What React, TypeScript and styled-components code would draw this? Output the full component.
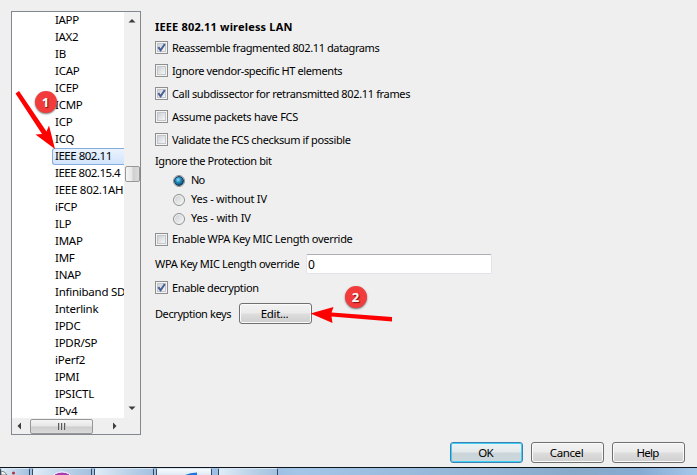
import React from 'react';
import styled, { createGlobalStyle, css } from 'styled-components';

const Global = createGlobalStyle`
  * { box-sizing: border-box; }
  body { margin: 0; background: #efefef; overflow: hidden; }
`;

const Screen = styled.div`
  position: relative;
  width: 697px;
  height: 475px;
  display: flex;
  flex-direction: column;
  overflow: hidden;
  background: #efefef;
  color: #000;
  font: 11px/17px 'Noto Sans', 'Open Sans', sans-serif;
`;

const Body = styled.div`
  display: flex;
  height: 435px;
  padding: 11px 0 0 11px;
  gap: 14px;
`;

const ListBox = styled.div`
  width: 130px;
  height: 424px;
  border: 1px solid #828790;
  display: grid;
  grid-template-columns: 112px 16px;
  grid-template-rows: 406px 16px;
  background: #efefef;
`;

const Items = styled.div`
  background: #fff;
  overflow: hidden;
  padding-left: 40px;
  font-size: 11.5px;
`;

const Item = styled.div<{ $selected?: boolean; $spacing?: number }>`
  height: 17px;
  width: 90px;
  padding-left: 3px;
  line-height: 15px;
  white-space: nowrap;
  letter-spacing: ${(p) => p.$spacing ?? -0.25}px;
  ${(p) =>
    p.$selected &&
    css`
      border-radius: 3px;
      background: linear-gradient(#edf4fd, #cfe3fc);
      box-shadow: inset 0 0 0 1px #84acdd;
    `}
`;

const VBar = styled.div`
  display: flex;
  flex-direction: column;
  align-items: center;
  background: #f0f0f0;
  padding: 5px 0 6px;
`;

const VThumb = styled.div`
  width: 15px;
  height: 16px;
  border: 1px solid #979797;
  border-radius: 2px;
  background: linear-gradient(90deg, #f5f5f5, #e6e6e6 48%, #cfcfcf 52%, #dcdcdc);
`;

const Spacer = styled.div<{ $size?: number }>`
  flex: ${(p) => (p.$size === undefined ? '1' : `0 0 ${p.$size}px`)};
`;

const HBar = styled.div`
  display: flex;
  align-items: center;
  background: #efefef;
  padding: 0 5px 0 4px;
`;

const HThumb = styled.div`
  width: 63px;
  height: 15px;
  display: flex;
  align-items: center;
  justify-content: center;
  gap: 1px;
  border: 1px solid #979797;
  border-radius: 2px;
  background: linear-gradient(#f5f5f5, #e6e6e6 48%, #cdcdcd 52%, #dadada);
`;

const Grip = styled.span`
  width: 2px;
  height: 7px;
  background: linear-gradient(90deg, #5b5b5b 50%, #c5c5c5 50%);
`;

const Options = styled.div`
  padding-top: 7px;
  display: flex;
  flex-direction: column;
`;

const Line = styled.div<{ $h: number; $indent?: number; $gap?: number }>`
  height: ${(p) => p.$h}px;
  padding-left: ${(p) => p.$indent ?? 0}px;
  display: flex;
  align-items: center;
  gap: ${(p) => p.$gap ?? 4}px;
`;

const Label = styled.span<{ $spacing?: number; $bold?: boolean; $w?: number; $raised?: boolean }>`
  width: ${(p) => (p.$w ? `${p.$w}px` : 'auto')};
  padding-bottom: ${(p) => (p.$raised ? 2 : 0)}px;
  white-space: nowrap;
  letter-spacing: ${(p) => p.$spacing ?? 0}px;
  font-weight: ${(p) => (p.$bold ? 700 : 400)};
`;

const Box = styled.span`
  width: 13px;
  height: 13px;
  padding: 1px;
  border: 1px solid #8e8f8f;
  background: #f4f4f4;
  display: flex;
`;

const BoxFace = styled.span`
  width: 9px;
  height: 9px;
  border: 1px solid #c3c6cb;
  background: linear-gradient(135deg, #cdd1d7, #f6f6f6);
  display: flex;

  svg { margin: -1px; flex: none; }
`;

const Radio = styled.span<{ $on?: boolean }>`
  width: 12px;
  height: 12px;
  border: 1px solid #8e8f8f;
  border-radius: 50%;
  display: flex;
  align-items: center;
  justify-content: center;
  background: ${(p) => (p.$on ? '#f4f4f4' : 'linear-gradient(135deg, #c9cdd2, #f8f8f8)')};
  box-shadow: inset 0 0 0 1px #f4f4f4;

  &::after {
    content: '';
    display: ${(p) => (p.$on ? 'block' : 'none')};
    width: 8px;
    height: 8px;
    border-radius: 50%;
    border: 1px solid #173a5c;
    background: radial-gradient(circle at 40% 35%, #8fdcf6 0, #2088b8 40%, #0b3f68 85%);
  }
`;

const Field = styled.div`
  width: 186px;
  height: 20px;
  padding-left: 1px;
  font-size: 12px;
  line-height: 20px;
  background: #fff;
  border: 1px solid #e2e3ea;
  border-top-color: #abadb3;
  border-radius: 2px;
`;

const Button = styled.button<{ $primary?: boolean; $spacing?: number }>`
  width: 73px;
  height: 21px;
  padding: 0 2px 0 0;
  border: 1px solid ${(p) => (p.$primary ? '#3c7fb1' : '#707070')};
  border-radius: 3px;
  font: inherit;
  font-size: 11.5px;
  line-height: 19px;
  letter-spacing: ${(p) => p.$spacing ?? -0.3}px;
  color: #000;
  background: ${(p) =>
    p.$primary
      ? 'linear-gradient(#eef3f5, #e3e9eb 48%, #cbd5d9 52%, #ccd8dc)'
      : 'linear-gradient(#f2f2f2, #ebebeb 48%, #dddddd 52%, #cfcfcf)'};
  box-shadow: inset 0 0 0 1px ${(p) => (p.$primary ? '#3fd0f5' : '#fafafa')};
`;

const Footer = styled.div`
  height: 32px;
  padding: 7px 12px 0 0;
  display: flex;
  justify-content: flex-end;
  gap: 8px;
`;

const Taskbar = styled.div`
  height: 8px;
  border-top: 1px solid #10151c;
  display: flex;
  background: linear-gradient(90deg, #9dc0e4 0 278px, #a3c6e8 300px, #87a9c9 580px, #85abd3 640px, #a5c8ea);
`;

const Task = styled.div<{ $w: number; $after?: number; $bright?: boolean }>`
  width: ${(p) => p.$w}px;
  height: 7px;
  flex: none;
  display: flex;
  justify-content: center;
  margin-right: ${(p) => p.$after ?? 2}px;
  border: 1px solid #34485f;
  border-top-color: #d7e6f4;
  border-bottom: 0;
  border-radius: 2px 2px 0 0;
  background: ${(p) =>
    p.$bright ? 'linear-gradient(#f6fafd, #dfeaf5)' : 'linear-gradient(100deg, #e0edf8, #b9d0e7 60%, #a3c1e0)'};
`;

const Overlay = styled.svg`
  position: absolute;
  inset: 0;
  pointer-events: none;
`;

const Badge = styled.div<{ $x: number; $y: number }>`
  position: absolute;
  left: ${(p) => p.$x}px;
  top: ${(p) => p.$y}px;
  width: 22px;
  height: 22px;
  border-radius: 50%;
  background: #f23b3b;
  box-shadow: 0 1px 2px rgba(0, 0, 0, 0.55);
  color: #fff;
  font: 700 13px/22px 'Open Sans', sans-serif;
  text-align: center;
  text-shadow: 1px 1px 1px rgba(70, 0, 0, 0.7);
`;

const items: [string, number?][] = [
  ['IAPP', -0.35], ['IAX2', -0.35], ['IB'], ['ICAP'], ['ICEP'], ['ICMP'], ['ICP'], ['ICQ'],
  ['IEEE 802.11', -0.48], ['IEEE 802.15.4', -0.5], ['IEEE 802.1AH', -0.25], ['iFCP'], ['ILP'], ['IMAP'],
  ['IMF'], ['INAP'], ['Infiniband SDP', -0.25], ['Interlink'], ['IPDC'], ['IPDR/SP'],
  ['iPerf2'], ['IPMI'], ['IPSICTL'], ['IPv4'],
];

const Arrow = ({ d }: { d: string }) => (
  <svg width="8" height="8" viewBox="0 0 8 8">
    <path d={d} fill="#3c3c3c" />
  </svg>
);

type OptionProps = { on?: boolean; label: string; spacing?: number; raised?: boolean };

const Check = ({ on, label, spacing, raised }: OptionProps) => (
  <Line $h={23}>
    <Box>
      <BoxFace>
        {on && (
          <svg width="9" height="9" viewBox="0 0 9 9">
            <path d="M1.3 4.2L3.6 7.2L7.8 1" fill="none" stroke="#4a5f97" strokeWidth="2" />
          </svg>
        )}
      </BoxFace>
    </Box>
    <Label $spacing={spacing} $raised={raised}>{label}</Label>
  </Line>
);

const Choice = ({ on, label, spacing }: OptionProps) => (
  <Line $h={19} $indent={18} $gap={6}>
    <Radio $on={on} />
    <Label $spacing={spacing} $raised>{label}</Label>
  </Line>
);

export default function App() {
  return (
    <Screen>
      <Global />
      <Body>
        <ListBox>
          <Items>
            {items.map(([name, spacing]) => (
              <Item key={name} $selected={name === 'IEEE 802.11'} $spacing={spacing}>
                {name}
              </Item>
            ))}
          </Items>
          <VBar>
            <Arrow d="M0.5 5.5L4 2L7.5 5.5Z" />
            <Spacer $size={141} />
            <VThumb />
            <Spacer />
            <Arrow d="M0.5 2.5L4 6L7.5 2.5Z" />
          </VBar>
          <HBar>
            <Arrow d="M5 0.5L1.5 4L5 7.5Z" />
            <Spacer $size={6} />
            <HThumb>
              <Grip />
              <Grip />
              <Grip />
            </HThumb>
            <Spacer />
            <Arrow d="M2 0.5L5.5 4L2 7.5Z" />
          </HBar>
        </ListBox>
        <Options>
          <Line $h={18}>
            <Label $bold $raised $spacing={0.17}>IEEE 802.11 wireless LAN</Label>
          </Line>
          <Check on label="Reassemble fragmented 802.11 datagrams" spacing={-0.39} />
          <Check label="Ignore vendor-specific HT elements" spacing={-0.39} />
          <Check on label="Call subdissector for retransmitted 802.11 frames" spacing={-0.35} />
          <Check label="Assume packets have FCS" spacing={-0.28} />
          <Check label="Validate the FCS checksum if possible" spacing={-0.37} />
          <Line $h={20}>
            <Label $raised $spacing={-0.42}>Ignore the Protection bit</Label>
          </Line>
          <Choice on label="No" spacing={-0.8} />
          <Choice label="Yes - without IV" spacing={-0.22} />
          <Choice label="Yes - with IV" spacing={-0.17} />
          <Check raised label="Enable WPA Key MIC Length override" spacing={-0.31} />
          <Line $h={25}>
            <Label $w={147} $spacing={-0.33}>WPA Key MIC Length override</Label>
            <Field>0</Field>
          </Line>
          <Check on label="Enable decryption" spacing={-0.39} />
          <Line $h={29}>
            <Label $w={80} $spacing={-0.42}>Decryption keys</Label>
            <Button>Edit...</Button>
          </Line>
        </Options>
      </Body>
      <Footer>
        <Button $primary $spacing={-0.9}>OK</Button>
        <Button $spacing={-0.4}>Cancel</Button>
        <Button $spacing={-0.7}>Help</Button>
      </Footer>
      <Taskbar>
        <Task $w={30}>
          <svg width="28" height="6" viewBox="0 0 28 6">
            <path d="M0 2Q4 2 6 6H0Z" fill="#f4f4f4" stroke="#666" strokeWidth="0.8" />
            <circle cx="12.5" cy="4" r="1.5" fill="#b3303c" />
          </svg>
        </Task>
        <Task $w={60}>
          <svg width="20" height="6" viewBox="0 0 20 6">
            <ellipse cx="10" cy="9" rx="9.5" ry="6" fill="#a63bb4" stroke="#fff" />
          </svg>
        </Task>
        <Task $w={60} />
        <Task $w={56} $after={6} $bright>
          <svg width="54" height="6" viewBox="0 0 54 6">
            <path d="M28 6Q33 3.5 40 3.5V6Z" fill="#1976e0" />
          </svg>
        </Task>
        <Task $w={60} />
      </Taskbar>
      <Overlay width="697" height="475" viewBox="0 0 697 475">
        <path d="M15.5 93.5L19 91L46.5 131.5L49 125.5L55 149L35.5 134.5L42 134Z" fill="#f00" />
        <path d="M392 317V321.5L331.5 316.5L332.5 323L310.5 313.5L333.5 307L331.5 312.5Z" fill="#f00" />
      </Overlay>
      <Badge $x={34.5} $y={91}>1</Badge>
      <Badge $x={344.5} $y={285.5}>2</Badge>
    </Screen>
  );
}
